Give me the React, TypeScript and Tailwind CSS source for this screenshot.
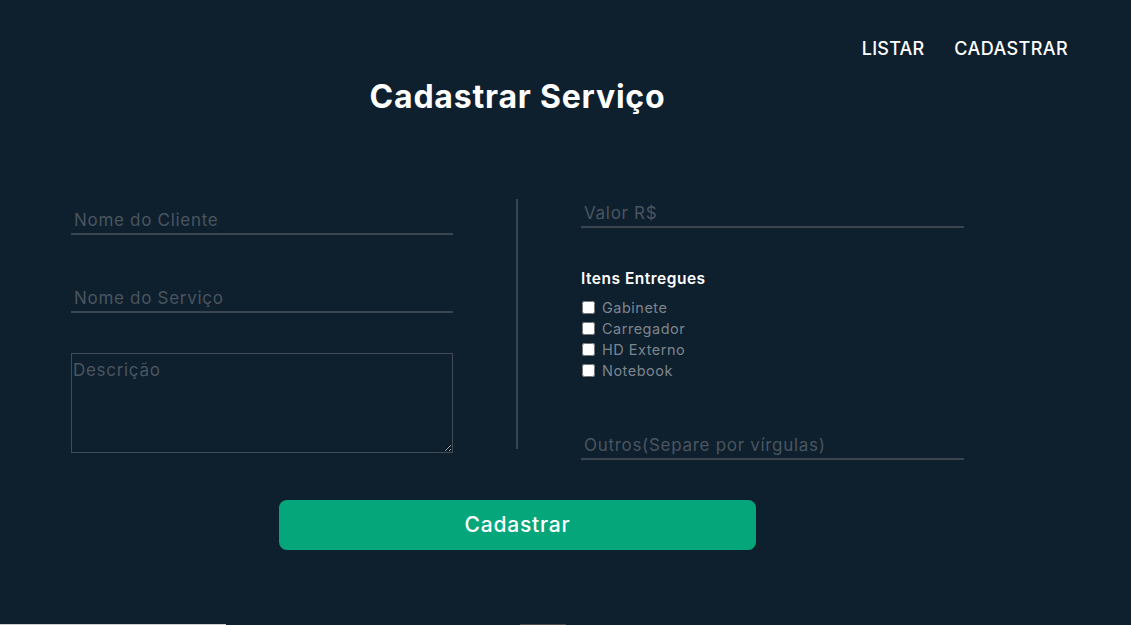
import React from "react";

const font = { fontFamily: "Inter, 'Noto Sans', sans-serif" };

function LineInput(props: { placeholder: string; className?: string }) {
  return (
    <input
      type="text"
      placeholder={props.placeholder}
      className={
        "w-full bg-transparent border-b-2 border-[#3a4550] px-[3px] text-[17px] tracking-[0.7px] text-white placeholder:text-[#4a555f] outline-none " +
        (props.className ?? "")
      }
    />
  );
}

const items = ["Gabinete", "Carregador", "HD Externo", "Notebook"];

export default function App() {
  return (
    <div
      className="w-[1131px] h-[625px] bg-[#0e1f2e] flex flex-col overflow-hidden"
      style={font}
    >
      <div className="h-[624px] flex flex-col">
        <nav className="flex justify-end gap-[30px] pr-[63px] pt-[35px] h-[63px]">
          <a className="text-white text-[18px] font-medium leading-[28px] tracking-[0.2px]">LISTAR</a>
          <a className="text-white text-[18px] font-medium leading-[28px] tracking-[0.4px]">CADASTRAR</a>
        </nav>

        <main className="ml-[71px] w-[893px] flex flex-col">
          <h1 className="mt-[15px] text-center text-white text-[32px] font-bold leading-[38px] tracking-[0.8px]">
            Cadastrar Serviço
          </h1>

          <div className="mt-[83px] flex items-start">
            <div className="w-[382px] flex flex-col">
              <LineInput placeholder="Nome do Cliente" className="h-[36px] pt-[7px]" />
              <LineInput placeholder="Nome do Serviço" className="h-[36px] pt-[7px] mt-[42px]" />
              <textarea
                placeholder="Descrição"
                className="mt-[40px] h-[100px] w-full bg-transparent border-[1.5px] border-[#404b56] px-[1px] py-[4px] text-[17px] tracking-[0.7px] text-white placeholder:text-[#4a555f] outline-none"
              />
            </div>

            <div className="ml-[63px] w-[2px] h-[250px] bg-[#3a4550]" />

            <div className="ml-[63px] w-[383px] flex flex-col">
              <LineInput placeholder="Valor R$" className="h-[29px]" />
              <h3 className="mt-[40px] text-white text-[15.5px] font-semibold leading-[22px] tracking-[0.5px]">
                Itens Entregues
              </h3>
              <div className="mt-[7px] flex flex-col">
                {items.map((item) => (
                  <label key={item} className="flex items-center h-[21px]">
                    <input type="checkbox" className="w-[13px] h-[13px] ml-[1px]" />
                    <span className="ml-[7px] text-[14.5px] tracking-[0.5px] text-[#7d858d]">{item}</span>
                  </label>
                ))}
              </div>
              <LineInput
                placeholder="Outros(Separe por vírgulas)"
                className="h-[36px] pt-[7px] mt-[43px]"
              />
            </div>
          </div>

          <button className="mt-[40px] mx-auto w-[477px] h-[50px] rounded-[8px] bg-[#05a77a] text-white text-[21px] font-medium tracking-[0.8px]">
            Cadastrar
          </button>
        </main>
      </div>
      <div className="h-[1px] flex">
        <div className="w-[226px] bg-[#cfcfcf]" />
        <div className="ml-[294px] w-[46px] bg-[#4a4a4a]" />
      </div>
    </div>
  );
}
